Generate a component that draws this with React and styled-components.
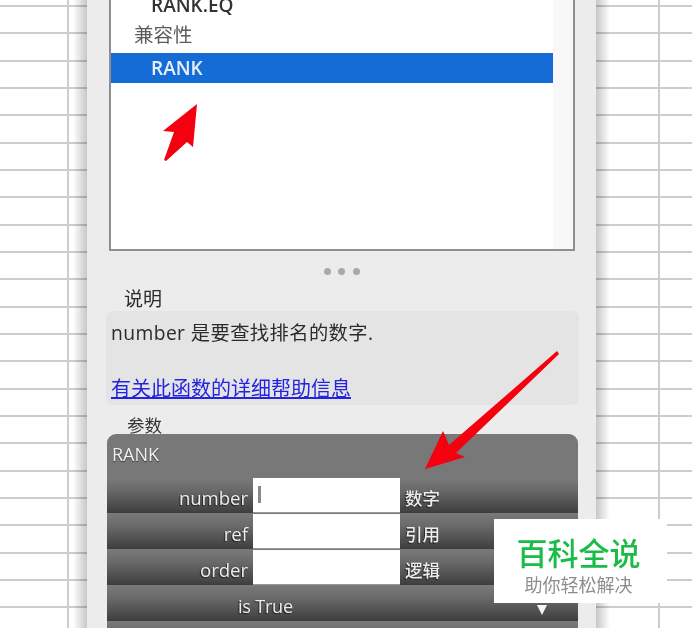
import React from 'react';
import styled, { createGlobalStyle } from 'styled-components';

const cjk = '"Noto Sans CJK SC", "Noto Sans", sans-serif';
const latin = '"Open Sans", "Noto Sans CJK SC", sans-serif';

const GlobalStyle = createGlobalStyle`
  html, body {
    margin: 0;
    padding: 0;
    background: #fff;
    overflow: hidden;
  }
`;

const App = () => (
  <>
    <GlobalStyle />
    <Page>
      <Sheet $width={87} $lineX={67} $side="left" />
      <Panel>
        <ListBox>
          <ListRows>
            <ListRow $height={24} $indent={40}>RANK.EQ</ListRow>
            <ListGroup>兼容性</ListGroup>
            <ListRow $height={30} $indent={40} $selected>RANK</ListRow>
          </ListRows>
          <ScrollTrack />
        </ListBox>
        <Dots>
          <Dot />
          <Dot />
          <Dot />
        </Dots>
        <DescLabel>说明</DescLabel>
        <DescBox>
          <DescText>number 是要查找排名的数字.</DescText>
          <HelpLink href="#">有关此函数的详细帮助信息</HelpLink>
        </DescBox>
        <ArgsLabel>参数</ArgsLabel>
        <ArgsPanel>
          <ArgsTitle>RANK</ArgsTitle>
          <ArgRow>
            <ArgName>number</ArgName>
            <ArgInput><Caret /></ArgInput>
            <ArgHint>数字</ArgHint>
          </ArgRow>
          <ArgRow>
            <ArgName>ref</ArgName>
            <ArgInput />
            <ArgHint>引用</ArgHint>
          </ArgRow>
          <ArgRow>
            <ArgName>order</ArgName>
            <ArgInput />
            <ArgHint>逻辑</ArgHint>
          </ArgRow>
          <ResultRow>
            <ResultText>is True</ResultText>
            <DropArrow />
          </ResultRow>
          <ArgRow />
        </ArgsPanel>
      </Panel>
      <Sheet $width={96} $lineX={62} $side="right" />
      <Arrows viewBox="0 0 692 628" width="692" height="628">
        <polygon fill="#f5000f" points="197,104 163,131 174,132 164,160 166,161 187,142 193,147" />
        <polygon fill="#f5000f" points="557,351 559,354 456,453 465,457 425,469 443,431 449,445" />
      </Arrows>
      <Watermark>
        <WatermarkTitle>百科全说</WatermarkTitle>
        <WatermarkSub>助你轻松解决</WatermarkSub>
      </Watermark>
    </Page>
  </>
);

export default App;

const Page = styled.div`
  position: relative;
  display: flex;
  width: 692px;
  height: 628px;
  overflow: hidden;
  filter: blur(0.4px);
`;

const Sheet = styled.div`
  flex: 0 0 ${(p) => p.$width}px;
  background-color: #fff;
  background-image:
    linear-gradient(${(p) => (p.$side === 'left' ? 'to left' : 'to right')}, rgba(0, 0, 0, 0.22), rgba(0, 0, 0, 0) 14px),
    linear-gradient(#cdcdcd, #cdcdcd),
    repeating-linear-gradient(to bottom, transparent 0, transparent 5px, #cdcdcd 5px, #cdcdcd 7px, transparent 7px, transparent 27.33px);
  background-repeat: no-repeat;
  background-size: 100% 100%, 2px 100%, 100% 100%;
  background-position: 0 0, ${(p) => p.$lineX}px 0, 0 0;
`;

const Panel = styled.div`
  flex: 1;
  display: flex;
  flex-direction: column;
  background: #ececec;
  min-width: 0;
`;

const ListBox = styled.div`
  flex: 0 0 auto;
  display: flex;
  height: 254px;
  margin: -3px 21px 0 22px;
  background: #fff;
  border: 2px solid #8f8f8f;
  box-sizing: border-box;
`;

const ListRows = styled.div`
  flex: 1;
  display: flex;
  flex-direction: column;
  margin-top: -6px;
`;

const ListRow = styled.div`
  display: flex;
  align-items: center;
  height: ${(p) => p.$height}px;
  padding-left: ${(p) => p.$indent}px;
  font: 600 19px ${latin};
  color: ${(p) => (p.$selected ? '#e8f0fb' : '#333')};
  background: ${(p) => (p.$selected ? '#156cd6' : 'transparent')};
`;

const ListGroup = styled.div`
  display: flex;
  align-items: center;
  height: 36px;
  box-sizing: border-box;
  padding: 0 0 4px 23px;
  font: 400 19.5px ${cjk};
  color: #5c5c5c;
`;

const ScrollTrack = styled.div`
  flex: 0 0 20px;
  background: #f8f8f8;
`;

const Dots = styled.div`
  flex: 0 0 40px;
  display: flex;
  align-items: center;
  justify-content: center;
  gap: 7.5px;
`;

const Dot = styled.span`
  width: 7px;
  height: 7px;
  border-radius: 50%;
  background: #a9a9a9;
`;

const DescLabel = styled.div`
  flex: 0 0 23px;
  margin-top: -3px;
  padding-left: 37px;
  font: 400 19px/20px ${cjk};
  color: #2a2a2a;
`;

const DescBox = styled.div`
  flex: 0 0 94px;
  display: flex;
  flex-direction: column;
  justify-content: space-between;
  box-sizing: border-box;
  margin: 0 17px 0 19px;
  padding: 7px 5px 2px;
  background: #e4e4e4;
  border-radius: 7px;
`;

const DescText = styled.div`
  font: 400 19.3px/30px ${latin};
  letter-spacing: 0.4px;
  color: #2b2b2b;
`;

const HelpLink = styled.a`
  font: 400 20px/30px ${cjk};
  color: #2424e0;
  text-decoration: underline;
`;

const ArgsLabel = styled.div`
  flex: 0 0 29px;
  display: flex;
  align-items: flex-end;
  padding-left: 40px;
  font: 400 17.5px/19px ${cjk};
  color: #333;
  box-sizing: border-box;
`;

const ArgsPanel = styled.div`
  flex: 1;
  display: flex;
  flex-direction: column;
  margin: 0 18px 0 20px;
  background: #787878;
  border-radius: 9px 9px 0 0;
  overflow: hidden;
`;

const ArgsTitle = styled.div`
  flex: 0 0 43px;
  padding-left: 5px;
  font: 500 18px/41px ${latin};
  color: #f2f2f2;
  text-shadow: 0 1px 1px #333;
  box-sizing: border-box;
`;

const ArgRow = styled.div`
  flex: 0 0 36px;
  display: grid;
  grid-template-columns: 146px 147px 1fr;
  align-items: stretch;
  background: linear-gradient(#7a7a7a 0%, #6a6a6a 35%, #3e3e3e 100%);
`;

const ArgName = styled.div`
  display: flex;
  align-items: center;
  justify-content: flex-end;
  padding: 4px 5px 0 0;
  font: 500 18.5px ${latin};
  color: #ededed;
  text-shadow: -1px 1px 1px #222;
`;

const ArgInput = styled.div`
  display: flex;
  align-items: flex-start;
  padding: 8px 5px 0;
  margin-top: 1px;
  background: #fff;
  border-bottom: 1px solid #9a9a9a;
  box-sizing: border-box;
`;

const Caret = styled.span`
  width: 3px;
  height: 17px;
  background: #8a8a8a;
`;

const ArgHint = styled.div`
  display: flex;
  align-items: center;
  padding: 4px 0 0 5px;
  font: 500 17.5px ${cjk};
  color: #ededed;
  text-shadow: -1px 1px 1px #222;
`;

const ResultRow = styled(ArgRow)`
  display: flex;
  align-items: center;
  justify-content: space-between;
  padding: 0 31px 0 131px;
`;

const ResultText = styled.span`
  padding-top: 5px;
  font: 500 18px ${latin};
  letter-spacing: -0.2px;
  color: #ededed;
  text-shadow: -1px 1px 1px #222;
`;

const DropArrow = styled.span`
  width: 0;
  height: 0;
  margin-top: 14px;
  border-left: 5px solid transparent;
  border-right: 5px solid transparent;
  border-top: 10px solid #f4f4f4;
`;

const Arrows = styled.svg`
  position: absolute;
  left: 0;
  top: 0;
  pointer-events: none;
`;

const Watermark = styled.div`
  position: absolute;
  left: 494px;
  top: 519px;
  width: 173px;
  height: 84px;
  box-sizing: border-box;
  padding-right: 4px;
  display: flex;
  flex-direction: column;
  align-items: center;
  background: #fff;
`;

const WatermarkTitle = styled.div`
  margin-top: 15px;
  font: 500 31px/36px ${cjk};
  color: #1bbb47;
`;

const WatermarkSub = styled.div`
  margin-top: 2px;
  font: 400 18px/24px ${cjk};
  color: #8d8d8d;
`;
